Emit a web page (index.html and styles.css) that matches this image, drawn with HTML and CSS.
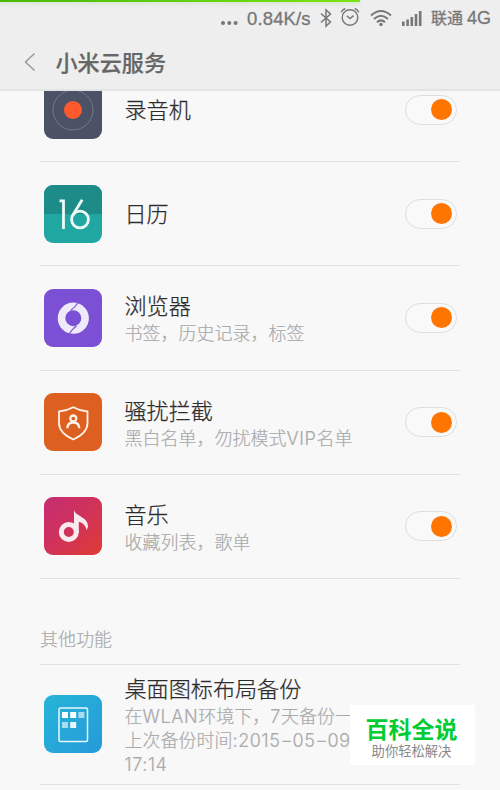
FILE: index.html
```html
<!DOCTYPE html>
<html lang="zh-CN">
<head>
<meta charset="utf-8">
<title>小米云服务</title>
<link rel="stylesheet" href="styles.css">
</head>
<body>
<div class="screen">
  <header class="header">
    <div class="progress"></div>
    <div class="status">
      <svg class="dots" width="18" height="6" viewBox="0 0 18 6"><g fill="#777"><circle cx="3" cy="3" r="2"/><circle cx="9.3" cy="3" r="2"/><circle cx="15.6" cy="3" r="2"/></g></svg>
      <span class="speed">0.84K/s</span>
      <svg class="bt" width="14" height="20" viewBox="0 0 14 20" fill="none" stroke="#777" stroke-width="1.5"><path d="M2 5.500 11.500 14 7 18V2l4.500 4L2 14.500"/></svg>
      <svg class="alarm" width="20" height="20" viewBox="0 0 20 20" fill="none" stroke="#777" stroke-width="1.400"><circle cx="10" cy="10.500" r="7.800"/><path d="M1.200 5.200Q2.500 2.500 5.300 1.500M18.800 5.200Q17.500 2.500 14.700 1.500M6.800 8.800 10 11.600 13.600 8.600"/></svg>
      <svg class="wifi" width="22" height="18" viewBox="0 0 22 18" fill="none" stroke="#777" stroke-width="2"><path d="M1 6.500Q11-2.500 21 6.500M4 10Q11 3.500 18 10M7 13.200Q11 9.500 15 13.200"/><circle cx="11" cy="15.500" r="1.700" fill="#777" stroke="none"/></svg>
      <svg class="signal" width="20" height="16" viewBox="0 0 20 16" fill="#777"><path d="M0 11.500h2.600V16H0zM4.300 9.500h2.600V16H4.300zM8.500 7h2.600v9H8.500zM12.700 4h2.600v12h-2.600zM16.900 1h2.600v15h-2.600z"/></svg>
      <span class="carrier">联通</span><span class="net">4G</span>
    </div>
    <div class="titlebar">
      <svg class="back" width="12" height="20" viewBox="0 0 12 20" fill="none" stroke="#999" stroke-width="1.500"><path d="M10.500 1.500 1.500 10l9 8.500"/></svg>
      <h1>小米云服务</h1>
    </div>
  </header>
  <main class="content">
    <ul class="list">
      <li class="row">
        <svg class="icon" viewBox="0 0 58 58"><rect width="58" height="58" rx="9" fill="#4c5266"/><circle cx="29" cy="29" r="20" fill="none" stroke="#737888"/><circle cx="29" cy="29" r="9" fill="#ff5a2c"/></svg>
        <div class="text"><h2>录音机</h2></div><span class="switch"></span>
      </li>
      <li class="row">
        <svg class="icon" viewBox="0 0 58 58"><rect width="58" height="58" rx="9" fill="#21a7a1"/><path d="M0 29V9a9 9 0 0 1 9-9h40a9 9 0 0 1 9 9v20z" fill="#1d8c88"/><g fill="none" stroke="#eefaf8" stroke-width="2.800"><path d="M15.500 15.900h4V44M38.200 14.700 28.700 30.300"/><circle cx="36" cy="34.500" r="8.400"/></g></svg>
        <div class="text"><h2>日历</h2></div><span class="switch"></span>
      </li>
      <li class="row">
        <svg class="icon" viewBox="0 0 58 58"><rect width="58" height="58" rx="9" fill="#7c50d4"/><circle cx="29.300" cy="29.200" r="11.800" fill="none" stroke="#efeafa" stroke-width="7.600"/><path d="M34.500 13Q31 18.500 26.500 21.500M32.500 37Q28.500 39.500 25 45.500" fill="none" stroke="#7c50d4" stroke-width="1.100"/></svg>
        <div class="text"><h2>浏览器</h2><p>书签，历史记录，标签</p></div><span class="switch"></span>
      </li>
      <li class="row">
        <svg class="icon" viewBox="0 0 58 58"><rect width="58" height="58" rx="9" fill="#dd6020"/><g fill="none" stroke="#fff2e8"><path d="M29.300 14.300Q36 18 43.500 18.500V30Q43.500 40 29.300 46.500 15 40 15 30V18.500Q22.500 18 29.300 14.300z" stroke-width="1.800"/><circle cx="29.300" cy="25.500" r="3" stroke-width="2.300"/><path d="M23.300 35.300Q23.500 29.500 29.300 29.500T35.300 35.300" stroke-width="2.300"/></g></svg>
        <div class="text"><h2>骚扰拦截</h2><p>黑白名单，勿扰模式<span class="latin">VIP</span>名单</p></div><span class="switch"></span>
      </li>
      <li class="row">
        <svg class="icon" viewBox="0 0 58 58"><defs><linearGradient id="music" x2="1" y2="1"><stop stop-color="#c52d73"/><stop offset=".5" stop-color="#d0325a"/><stop offset="1" stop-color="#df3c32"/></linearGradient></defs><rect width="58" height="58" rx="9" fill="url(#music)"/><circle cx="24.800" cy="35" r="7.500" fill="none" stroke="#faeaf0" stroke-width="5"/><path d="M30 13C31 19 44 20 44 29Q44 31 42.500 33 41 26 34.800 24.800V36H30z" fill="#faeaf0"/></svg>
        <div class="text"><h2>音乐</h2><p>收藏列表，歌单</p></div><span class="switch"></span>
      </li>
    </ul>
    <h3 class="section">其他功能</h3>
    <div class="row backup">
      <svg class="icon" viewBox="0 0 58 58"><defs><linearGradient id="desk" x2="1" y2="1"><stop stop-color="#25b5d8"/><stop offset="1" stop-color="#279ad8"/></linearGradient></defs><rect width="58" height="58" rx="9" fill="url(#desk)"/><rect x="15" y="13" width="28.500" height="33.500" rx="1.500" fill="none" stroke="#e9f8fc" stroke-width="1.500"/><g fill="#fff"><path d="M18 17h6v6h-6zM26.200 17h6v6h-6z"/><path d="M26.200 27h6v6h-6z" opacity=".9"/><path d="M34.400 17h6v6h-6zM18 27h6v6h-6z" opacity=".6"/></g></svg>
      <div class="text"><h2>桌面图标布局备份</h2><p>在<span class="latin">WLAN</span>环境下，<span class="latin">7</span>天备份一<br>上次备份时间<span class="latin">:2015<i class="dash">-</i>05<i class="dash">-</i>09</span><br><span class="latin">17:14</span></p></div>
    </div>
  </main>
  <aside class="badge"><strong>百科全说</strong><span>助你轻松解决</span></aside>
</div>
</body>
</html>
```
FILE: styles.css
```css
* { box-sizing: border-box; margin: 0; padding: 0; }
body { background: #f8f8f8; font-family: "Liberation Sans", "Noto Sans CJK SC", sans-serif; }
.screen { position: relative; width: 500px; height: 790px; overflow: hidden; display: flex; flex-direction: column; }
.header { flex: none; height: 91px; background: #eee; border-bottom: 2px solid #e3e3e3; }
.progress { width: 360px; height: 2px; background: linear-gradient(90deg, #48b80b, #7be514); box-shadow: 0 1px 4px rgba(90, 190, 40, .3); }
.status { height: 33px; display: flex; align-items: center; justify-content: flex-end; padding-right: 8px; color: #777; font-size: 18px; line-height: 33px; -webkit-text-stroke: .3px #777; }
.dots { margin: 8px 9px 0 0; }
.speed { width: 65px; font-size: 18.500px; letter-spacing: .15px; }
.bt { margin: -1px 7px 0 7px; }
.alarm { margin: -3px 10px 0 0; }
.wifi { margin: -2px 10px 0 0; }
.signal { margin: -1px 9px 0 0; }
.carrier { font-size: 16px; margin-right: 4px; }
.net { width: 25px; font-size: 18px; }
.titlebar { height: 54px; display: flex; align-items: center; padding-left: 24px; }
.back { margin-right: 19.500px; }
h1 { position: relative; top: 2px; font-size: 22.100px; line-height: 30px; font-weight: 500; color: #666; -webkit-text-stroke: .2px #666; }
.content { flex: 1; min-height: 0; overflow: hidden; padding: 0 40px; }
.list { list-style: none; margin-top: -33px; }
.row { height: 104.200px; display: flex; align-items: center; padding: 0 3.500px 0 4px; border-bottom: 1px solid #e2e2e2; }
.icon { flex: none; width: 58px; height: 58px; margin-right: 22.500px; }
.text { flex: 1; white-space: nowrap; padding-top: 3px; }
h2 { font-size: 22.100px; line-height: 30px; font-weight: 300; color: #2c2c2c; -webkit-text-stroke: .25px #2c2c2c; }
p { font-size: 18px; line-height: 24px; font-weight: 300; color: #aaa; -webkit-text-stroke: .2px #aaa; }
.latin { font-family: Inter, "Liberation Sans", sans-serif; font-size: 18px; line-height: 1; letter-spacing: .6px; font-feature-settings: "calt" 0; }
.dash { display: inline-block; width: 12px; text-align: center; font-style: normal; transform: scaleX(1.500); }
.switch { flex: none; width: 52px; height: 30px; display: flex; align-items: center; justify-content: flex-end; padding-right: 3.500px; border: 1px solid #dedede; border-radius: 15px; background: #f9f9f9; }
.switch::before { content: ""; width: 21px; height: 21px; border-radius: 50%; background: #ff7500; }
.section { height: 86px; padding-top: 48px; border-bottom: 1px solid #e2e2e2; font-size: 18px; line-height: 26px; font-weight: 300; color: #aaa; -webkit-text-stroke: .2px #aaa; }
.backup { height: 120px; }
.badge { position: absolute; left: 350px; top: 705px; width: 125px; height: 60px; background: #fff; display: flex; flex-direction: column; align-items: center; padding: 12px 2px 0 0; }
.badge strong { font-size: 23px; line-height: 27px; font-weight: 700; color: #0c3; }
.badge span { font-size: 13.300px; line-height: 16px; color: #888; }
```
